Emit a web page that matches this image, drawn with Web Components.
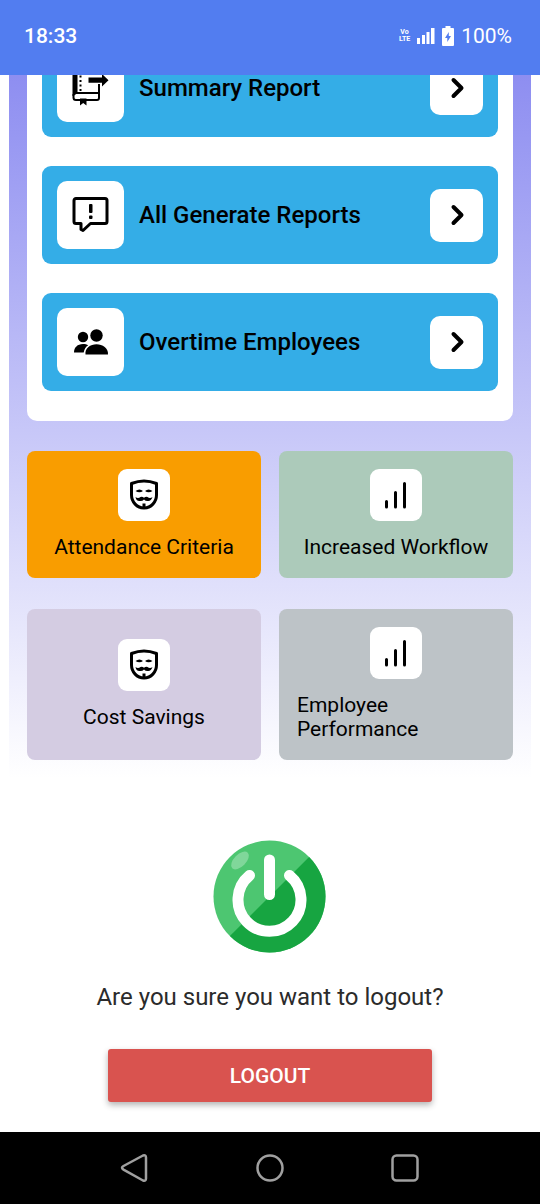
<!DOCTYPE html>
<html lang="en">
<head>
<meta charset="utf-8">
<meta name="viewport" content="width=device-width, initial-scale=1">
<title>Reports</title>
<style>
  body { margin: 0; font-family: Roboto, "Liberation Sans", sans-serif; color: #000; background: #fff; }
</style>
</head>
<body>
<app-screen>
  <status-bar slot="status" time="18:33" battery="100%"></status-bar>
  <gradient-panel>
    <report-list slot="list">
      <report-row icon="journal">Summary Report</report-row>
      <report-row icon="message">All Generate Reports</report-row>
      <report-row icon="people">Overtime Employees</report-row>
    </report-list>
    <feature-tile icon="mask" style="--tile: #f99d00">Attendance Criteria</feature-tile>
    <feature-tile icon="bars" style="--tile: #accaba">Increased Workflow</feature-tile>
    <feature-tile icon="mask" style="--tile: #d4cce2">Cost Savings</feature-tile>
    <feature-tile icon="bars" style="--tile: #bdc3c7">Employee Performance</feature-tile>
  </gradient-panel>
  <logout-prompt>Are you sure you want to logout?</logout-prompt>
  <nav-bar slot="nav"></nav-bar>
</app-screen>

<script>
const ICONS = {
  journal: `<svg viewBox="0 0 38 38" width="38" height="38"><g fill="none" stroke="#000" stroke-width="2"><path d="M27 15v14q0 2-2 2H4q-2.500 0-2.500-2.500V25M3 24h23" stroke-width="2"/><path d="M8.500 2v20" stroke-dasharray="2 2.500"/></g><path d="M.5 0h5v24l-4 3h-1zM16.500 8.500H30V5l6.500 6.200L30 17.500v-3.800H16.500zM8 29.500h6.500v7L11.200 34 8 36.500z"/></svg>`,
  message: `<svg viewBox="0 0 38 38" width="38" height="38"><g fill="none" stroke="#000" stroke-width="3" stroke-linejoin="round"><path d="M4 2.500h29a2 2 0 0 1 2 2v21a2 2 0 0 1-2 2H18.500L11 34.500l-2-1v-6H4a2 2 0 0 1-2-2v-21a2 2 0 0 1 2-2z"/></g><rect x="17" y="8" width="3.500" height="9" rx="1"/><rect x="17" y="19.500" width="3.500" height="3.500" rx="1"/></svg>`,
  people: `<svg viewBox="0 0 36 28" width="36" height="28"><circle cx="10" cy="9" r="5.200"/><path d="M1 24.500c0-5 3.500-8.500 9-8.500 2 0 3.800.400 5.200 1.200-2.500 1.600-4 3.800-4.500 7.300z"/><circle cx="23.500" cy="7.500" r="6.200"/><path d="M12.500 26.500c-1-6.500 5-10.300 11-10.300s12 3.800 11.500 10.300z"/></svg>`,
  chevron: `<svg viewBox="0 0 24 24" width="24" height="24" fill="none" stroke="#000" stroke-width="4" stroke-linecap="round" stroke-linejoin="round"><path d="m8.500 4 8 8-8 8"/></svg>`,
  mask: `<svg viewBox="0 0 30 32" width="30" height="32"><path d="M2.500 4.500Q9 2 15 2t12.500 2.500V16c0 7-5.500 13-12.500 13S2.500 23 2.500 16z" fill="none" stroke="#000" stroke-width="3" stroke-linejoin="round"/><path d="M6.500 12q4-3 7.500 0-3.500 2.500-7.500 0zM16 12q3.500-3 7.500 0-4 2.500-7.500 0zM6.500 18q2.500 2 5 0 1.500-1 3.500.800 2-1.800 3.500-.800 2.500 2 5 0-1.500 4.500-5 4-2 0-3.500-1.500-1.500 1.500-3.500 1.500C8.500 22.500 7 21 6.500 18zM13.500 24.500h3V30h-3z"/></svg>`,
  bars: `<svg viewBox="0 0 30 32" width="30" height="32" fill="none" stroke="#000" stroke-width="3" stroke-linecap="round"><path d="M5.500 22.500V28M14.500 13.500V28M23.500 4.500V28"/></svg>`
};

const define = (name, render) => customElements.define(name, class extends HTMLElement {
  constructor() { super(); this.attachShadow({ mode: 'open' }); }
  connectedCallback() { this.shadowRoot.innerHTML = render(this); }
});

define('ui-icon', el => `
  <style>:host { display: flex; } svg { display: block; }</style>
  ${ICONS[el.getAttribute('name')]}`);

/* Phone screen: the page is held at its scrolled-down end between the two system bars. */
define('app-screen', () => `
  <style>
    :host { display: flex; flex-direction: column; height: 100vh; }
    main { flex: 1; min-height: 0; display: flex; flex-direction: column; justify-content: flex-end; overflow: hidden; }
  </style>
  <slot name="status"></slot>
  <main><slot></slot></main>
  <slot name="nav"></slot>`);

define('status-bar', el => `
  <style>
    :host { display: flex; align-items: center; justify-content: space-between; flex-shrink: 0; box-sizing: border-box;
      height: 75px; padding: 0 28px 3px 24px; background: #527df0; color: #fff; font-size: 21px; line-height: 24px; }
    .time { font-weight: 500; }
    .right { display: flex; align-items: center; gap: 7px; }
    .volte { font-size: 7px; line-height: 7px; font-weight: 700; text-align: center; }
    svg { display: block; fill: #fff; }
  </style>
  <span class="time">${el.getAttribute('time')}</span>
  <div class="right">
    <span class="volte">Vo<br>LTE</span>
    <svg width="18" height="16" viewBox="0 0 18 16"><path d="M0 10h3v6H0zM5 7h3v9H5zM9.500 4h3v12h-3zM14 0h3.500v16H14z"/></svg>
    <svg width="12" height="20" viewBox="0 0 12 20"><path fill-rule="evenodd" d="M3.500 0h5v2H11a1 1 0 0 1 1 1v16a1 1 0 0 1-1 1H1a1 1 0 0 1-1-1V3a1 1 0 0 1 1-1h2.500zM6.800 6 3 12h2.300v4L9 10H6.800z"/></svg>
    <span>${el.getAttribute('battery')}</span>
  </div>`);

define('gradient-panel', () => `
  <style>
    :host { display: block; flex-shrink: 0; margin: 0 9px; padding: 0 18px 18px;
      background: linear-gradient(#8888f0, #fff); }
    .tiles { display: grid; grid-template-columns: 1fr 1fr; gap: 31px 18px; margin-top: 30px; }
  </style>
  <slot name="list"></slot>
  <div class="tiles"><slot></slot></div>`);

define('report-list', () => `
  <style>
    :host { display: flex; flex-direction: column; gap: 29px; padding: 0 15px 30px; background: #fff; border-radius: 10px; }
  </style>
  <slot></slot>`);

define('report-row', el => `
  <style>
    :host { display: flex; align-items: center; gap: 15px; padding: 15px; background: #34ade7; border-radius: 9px; }
    .icon, button { display: flex; align-items: center; justify-content: center; flex-shrink: 0; background: #fff; border-radius: 10px; }
    .icon { width: 67px; height: 68px; }
    .label { flex: 1; font-size: 24px; line-height: 28px; font-weight: 500; }
    button { width: 53px; height: 53px; padding: 0; border: 0; }
  </style>
  <span class="icon"><ui-icon name="${el.getAttribute('icon')}"></ui-icon></span>
  <span class="label"><slot></slot></span>
  <button aria-label="Open ${el.textContent}"><ui-icon name="chevron"></ui-icon></button>`);

define('feature-tile', el => `
  <style>
    :host { display: flex; flex-direction: column; align-items: center; justify-content: center; gap: 14px;
      padding: 18px 18px 19px; background: var(--tile); border-radius: 8px; font-size: 21px; line-height: 24px; }
    .icon { display: flex; align-items: center; justify-content: center; width: 52px; height: 52px; background: #fff; border-radius: 9px; }
  </style>
  <span class="icon"><ui-icon name="${el.getAttribute('icon')}"></ui-icon></span>
  <span><slot></slot></span>`);

define('logout-prompt', () => `
  <style>
    :host { display: flex; flex-direction: column; align-items: center; flex-shrink: 0; padding: 62px 0 30px; }
    svg { display: block; }
    p { margin: 30px 0 38px; font-size: 24px; line-height: 28px; color: #2b2b2b; }
    button { width: 60%; height: 53px; border: 0; border-radius: 3px; background: #d9534f; color: #fff;
      font: 500 21px/24px Roboto, "Liberation Sans", sans-serif; box-shadow: 0 3px 6px rgba(0, 0, 0, .3); }
  </style>
  <svg width="114" height="113" viewBox="0 0 114 113">
    <circle cx="56.500" cy="56.500" r="56" fill="#4dc671"/>
    <path d="M96.100 16.900A56 56 0 0 1 16.900 96.100z" fill="#17a541"/>
    <ellipse cx="27" cy="20.500" rx="11" ry="6" transform="rotate(-45 27 20.500)" fill="#80d79a"/>
    <path d="M56.500 20v34.500M36.500 35.500a31.500 31.500 0 1 0 40 0" fill="none" stroke="#fff" stroke-width="11" stroke-linecap="round"/>
  </svg>
  <p><slot></slot></p>
  <button>LOGOUT</button>`);

define('nav-bar', () => `
  <style>
    :host { display: grid; grid-template-columns: repeat(3, 1fr); flex-shrink: 0; box-sizing: border-box;
      height: 72px; padding: 0 12.5%; background: #000; }
    button { display: flex; align-items: center; justify-content: center; padding: 0; border: 0; background: none; }
    svg { fill: none; stroke: #a0a0a0; stroke-width: 2.500; stroke-linejoin: round; }
  </style>
  <button aria-label="Back"><svg width="30" height="30" viewBox="0 0 30 30"><path d="M23 2.500 3.500 13q-3 1.800 0 3.600L23 27.500q3 1 3-2v-21q0-3-3-2z"/></svg></button>
  <button aria-label="Home"><svg width="30" height="30" viewBox="0 0 30 30"><circle cx="15" cy="15" r="12.500"/></svg></button>
  <button aria-label="Recent apps"><svg width="30" height="30" viewBox="0 0 30 30"><rect x="2.500" y="2.500" width="25" height="25" rx="4"/></svg></button>`);
</script>
</body>
</html>
